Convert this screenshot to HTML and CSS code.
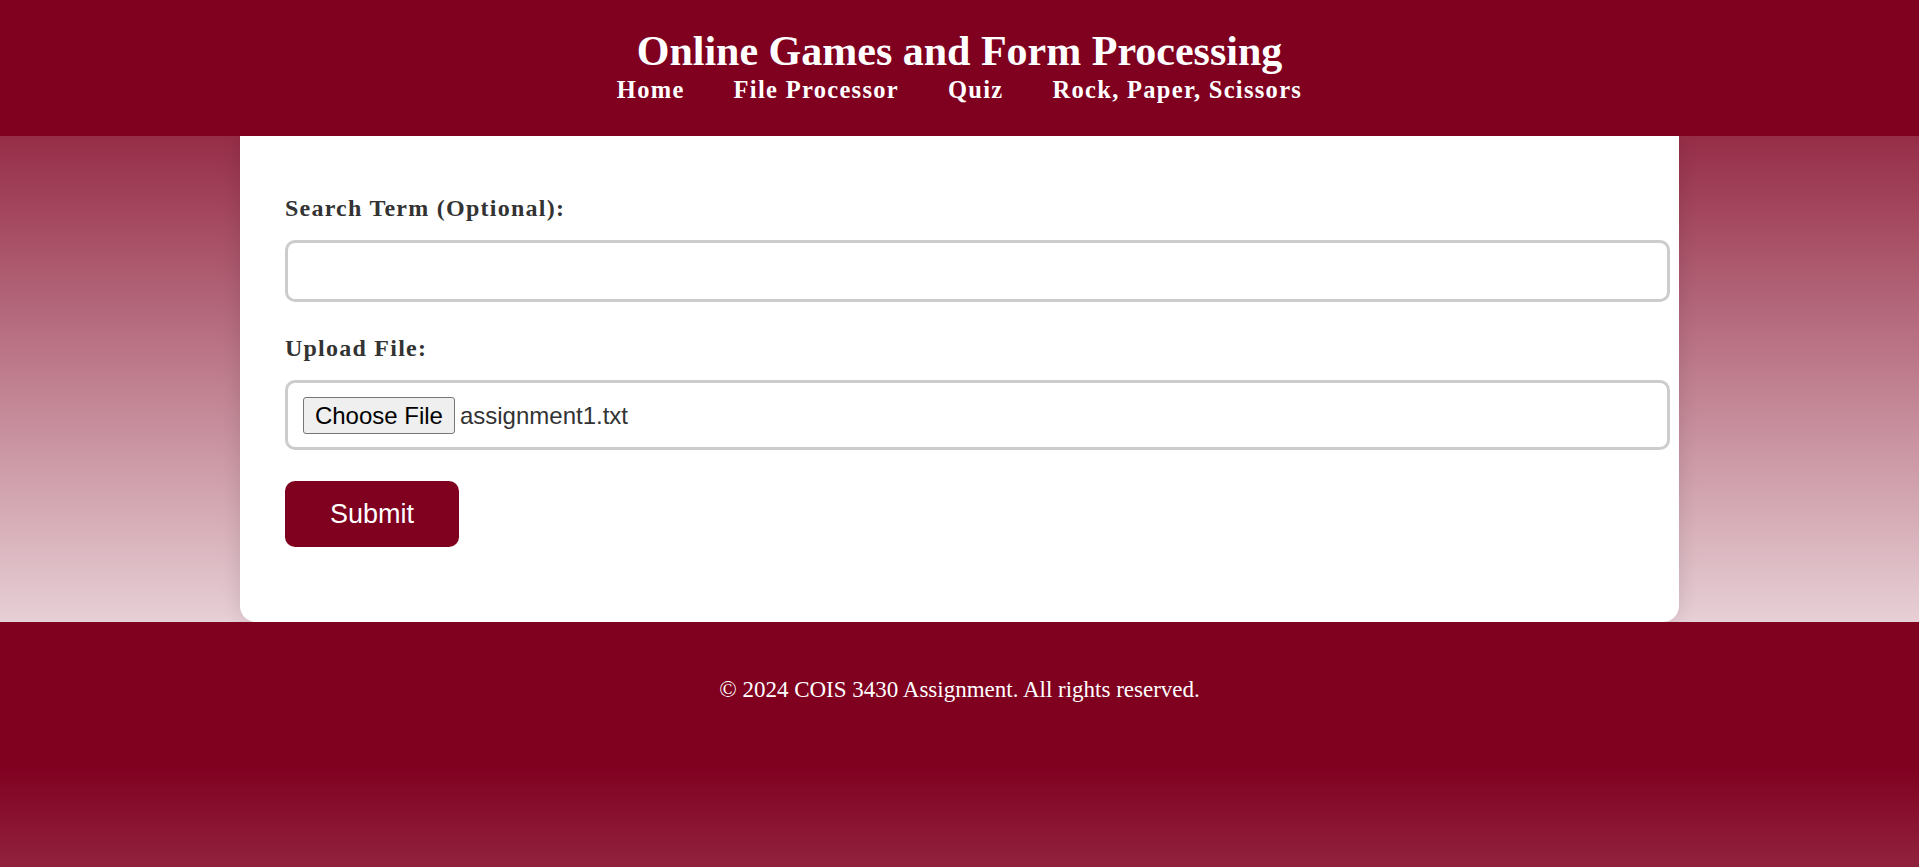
FILE: index.html
```html
<!DOCTYPE html>
<html lang="en">
<head>
<meta charset="utf-8">
<title>File Processor</title>
<link rel="stylesheet" href="styles.css">
</head>
<body>
<header class="site-header">
  <h1 class="site-title">Online Games and Form Processing</h1>
  <nav class="site-nav">
    <a href="#">Home</a>
    <a href="#">File Processor</a>
    <a href="#">Quiz</a>
    <a href="#">Rock, Paper, Scissors</a>
  </nav>
</header>
<main class="page">
  <section class="card">
    <form class="upload-form">
      <label class="field-label" for="search">Search Term (Optional):</label>
      <input class="field-input text-field" type="text" id="search" name="search">
      <label class="field-label">Upload File:</label>
      <div class="field-input file-field">
        <span class="file-btn">Choose File</span>
        <span class="file-name">assignment1.txt</span>
      </div>
      <button class="submit-btn" type="button">Submit</button>
    </form>
  </section>
</main>
<footer class="site-footer">
  <p class="footer-text">&copy; 2024 COIS 3430 Assignment. All rights reserved.</p>
</footer>
</body>
</html>
```

FILE: styles.css
```css
body {
  margin: 0;
  background: linear-gradient(to bottom, #800020, #ffffff);
  font-family: "Liberation Serif", "Times New Roman", serif;
}

.site-header {
  position: relative;
  z-index: 1;
  background: #800020;
  color: #ffffff;
  text-align: center;
  padding: 27px 0 32px;
}

.site-title {
  margin: 0;
  font-size: 42px;
  line-height: 48px;
  font-weight: bold;
}

.site-nav {
  margin-top: 1px;
  display: flex;
  justify-content: center;
  gap: 49px;
  font-size: 24.5px;
  line-height: 28px;
  font-weight: bold;
  letter-spacing: 1.3px;
}

.site-nav a {
  color: #ffffff;
  text-decoration: none;
}

.card {
  width: 75%;
  box-sizing: border-box;
  margin: 0 auto;
  background: #ffffff;
  padding: 58px 45px 75px;
  border-radius: 0 0 16px 16px;
  box-shadow: 0 0 20px rgba(0, 0, 0, 0.12);
}

.field-label {
  display: block;
  font-size: 24px;
  line-height: 28px;
  font-weight: bold;
  color: #333333;
  letter-spacing: 1.25px;
  margin-bottom: 18px;
}

.field-input {
  display: block;
  width: 100%;
  box-sizing: content-box;
  padding: 15px;
  border: 3px solid #cccccc;
  border-radius: 10px;
  background: #ffffff;
  margin: 0 0 32px;
  font-family: "Liberation Sans", Arial, sans-serif;
  font-size: 20px;
  color: #333333;
  outline: none;
}

.text-field {
  height: 26px;
}

.file-field {
  display: flex;
  align-items: center;
  height: 34px;
  margin-bottom: 31px;
}

.file-btn {
  font-family: "Liberation Sans", Arial, sans-serif;
  font-size: 24px;
  line-height: 27px;
  padding: 4px 11px;
  border: 1px solid #767676;
  border-radius: 3px;
  background: #efefef;
  color: #000000;
}

.file-name {
  margin-left: 5px;
  font-size: 24px;
  line-height: 27px;
  color: #333333;
}

.submit-btn {
  display: block;
  border: none;
  border-radius: 10px;
  background: #800020;
  color: #ffffff;
  font-family: "Liberation Sans", Arial, sans-serif;
  font-size: 27px;
  line-height: 32px;
  padding: 17px 45px;
}

.site-footer {
  background: #800020;
  color: #ffffff;
  text-align: center;
  padding: 55px 0 62px;
}

.footer-text {
  margin: 0;
  font-size: 23px;
  line-height: 26px;
}
```
